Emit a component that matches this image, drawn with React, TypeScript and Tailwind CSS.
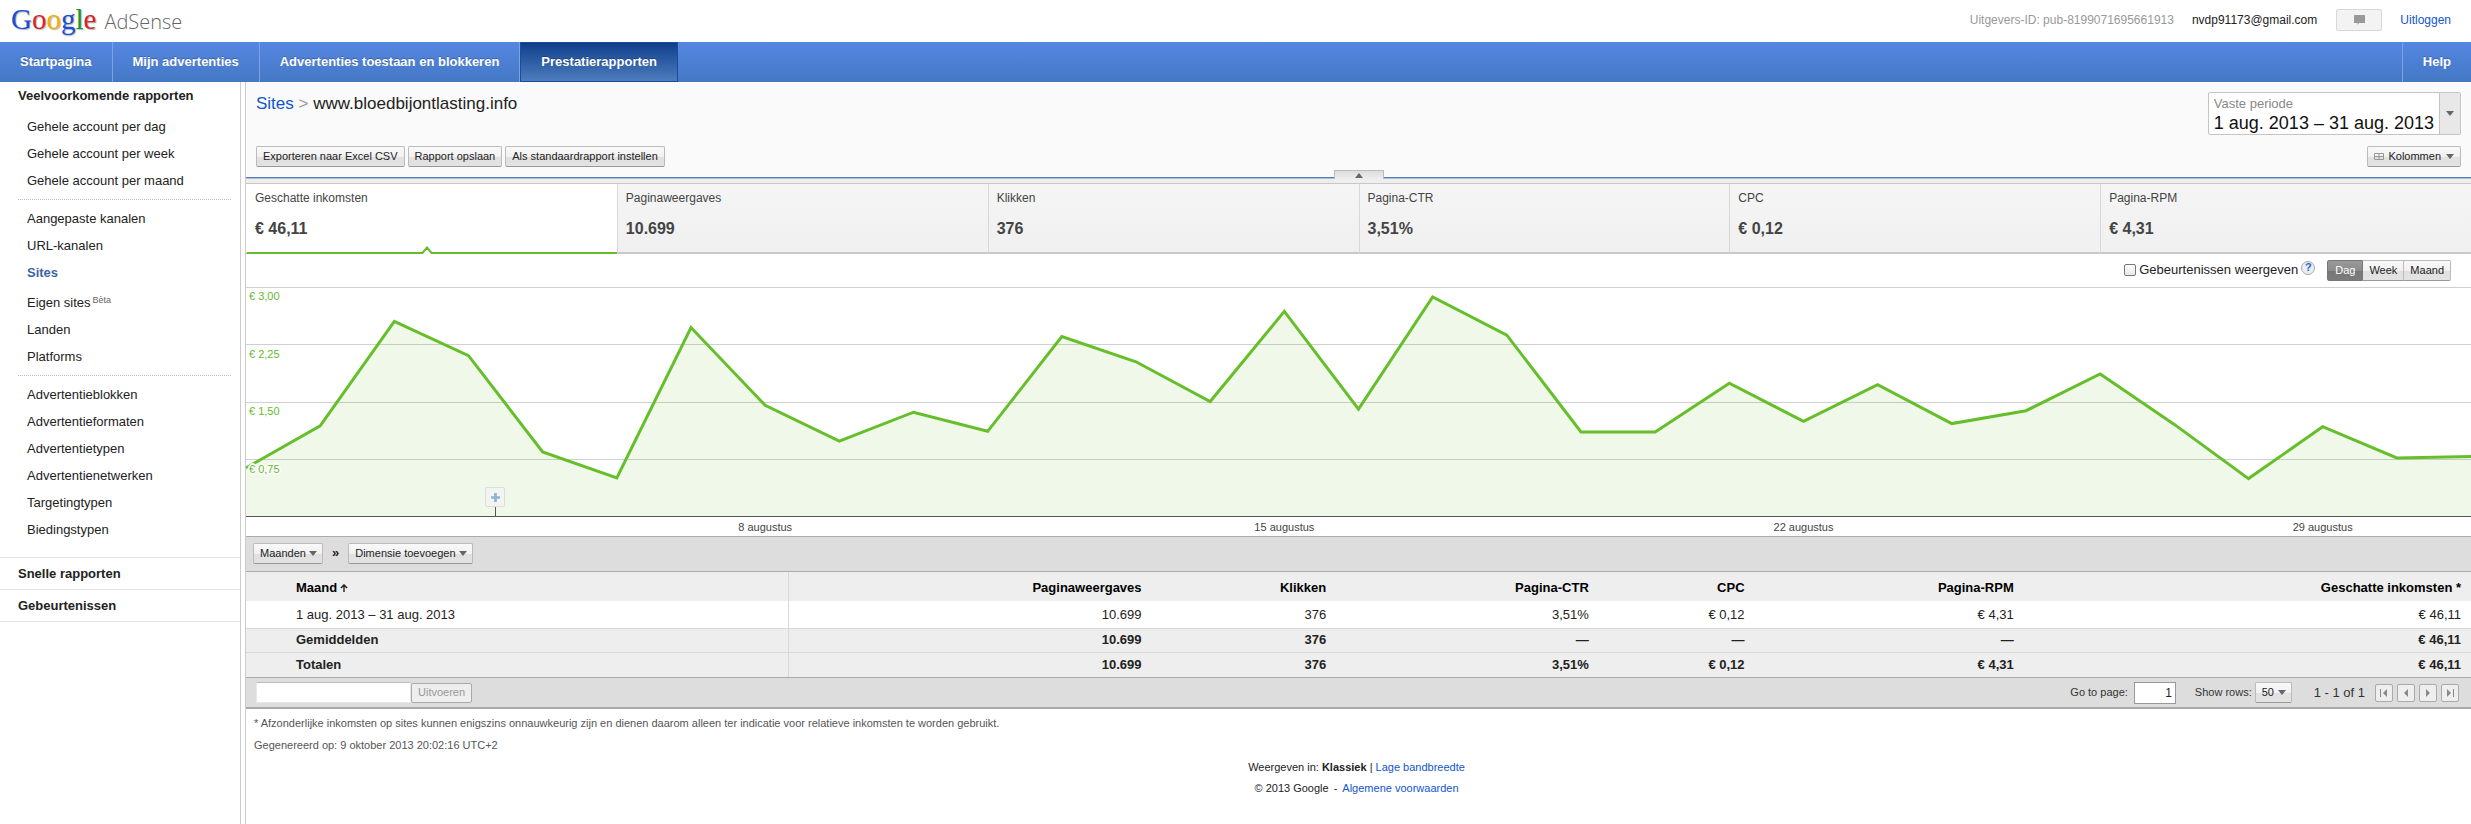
import type { ReactNode } from "react";

const buttonLook =
  "h-[21px] rounded-[2px] border border-[#bbb] border-b-[#999] bg-[linear-gradient(#f9f9f9_0%,#f1f1f1_50%,#e0e0e0_51%,#e3e3e3_100%)] text-[11px] text-[#222]";

const sidebarGroups: { label: string; beta?: boolean; active?: boolean }[][] = [
  [
    { label: "Gehele account per dag" },
    { label: "Gehele account per week" },
    { label: "Gehele account per maand" },
  ],
  [
    { label: "Aangepaste kanalen" },
    { label: "URL-kanalen" },
    { label: "Sites", active: true },
    { label: "Eigen sites", beta: true },
    { label: "Landen" },
    { label: "Platforms" },
  ],
  [
    { label: "Advertentieblokken" },
    { label: "Advertentieformaten" },
    { label: "Advertentietypen" },
    { label: "Advertentienetwerken" },
    { label: "Targetingtypen" },
    { label: "Biedingstypen" },
  ],
];

const metrics = [
  { label: "Geschatte inkomsten", value: "€ 46,11" },
  { label: "Paginaweergaves", value: "10.699" },
  { label: "Klikken", value: "376" },
  { label: "Pagina-CTR", value: "3,51%" },
  { label: "CPC", value: "€ 0,12" },
  { label: "Pagina-RPM", value: "€ 4,31" },
];

// Daily earnings in euros, 1 to 31 August
const earnings = [
  0.63, 1.18, 2.55, 2.1, 0.84, 0.5, 2.47, 1.45, 0.98, 1.36, 1.11, 2.35, 2.02,
  1.5, 2.68, 1.4, 2.87, 2.37, 1.1, 1.1, 1.74, 1.24, 1.72, 1.21, 1.38, 1.86,
  1.2, 0.49, 1.17, 0.76, 0.78,
];
const weekDays = [8, 15, 22, 29];
const scaleLabels = ["€ 3,00", "€ 2,25", "€ 1,50", "€ 0,75"];

const CHART_W = 3000;
const CHART_H = 229;

function Caret({ className = "" }: { className?: string }) {
  return (
    <svg viewBox="0 0 8 5" className={"h-[5px] w-[8px] shrink-0 " + className} aria-hidden="true">
      <path d="M0 0h8L4 5z" fill="#666" />
    </svg>
  );
}

function PillSelect({ label, value }: { label: string; value: string }) {
  return (
    <span className="relative inline-flex items-center">
      <select aria-label={label} className={buttonLook + " appearance-none pl-[6px] pr-[16px]"}>
        <option>{value}</option>
      </select>
      <Caret className="pointer-events-none absolute right-[6px]" />
    </span>
  );
}

function NavLink({ children, className = "" }: { children: ReactNode; className?: string }) {
  return (
    <a
      href="#"
      className={
        "flex items-center px-[20px] text-[13px] font-bold text-white [text-shadow:0_-1px_0_rgba(0,0,0,0.25)] " + className
      }
    >
      {children}
    </a>
  );
}

function Header() {
  return (
    <header className="flex h-[42px] items-center justify-between bg-white pb-[2px] pl-[11px] pr-[20px]">
      <a href="#" className="flex items-baseline gap-[8px]">
        <span className="font-['Liberation_Serif',serif] text-[29px] leading-[36px] [text-shadow:1px_1px_1px_rgba(0,0,0,0.3)]">
          <span className="text-[#1a4fd6]">G</span>
          <span className="text-[#d62428]">o</span>
          <span className="text-[#eeb003]">o</span>
          <span className="text-[#1a4fd6]">g</span>
          <span className="text-[#149a2c]">l</span>
          <span className="text-[#d62428]">e</span>
        </span>
        <span className="font-['Open_Sans',sans-serif] text-[20px] font-light leading-[36px] text-[#666]">AdSense</span>
      </a>
      <div className="flex items-center text-[12px]">
        <span className="mr-[18px] text-[#999]">Uitgevers-ID: pub-8199071695661913</span>
        <span className="mr-[19px] text-[#222]">nvdp91173@gmail.com</span>
        <button
          type="button"
          aria-label="Feedback"
          className="mr-[18px] flex h-[22px] w-[46px] items-center justify-center rounded-[2px] border border-[#d8d8d8] bg-[#f3f3f3]"
        >
          <svg viewBox="0 0 11 10" className="h-[10px] w-[11px]" aria-hidden="true">
            <path d="M0 0h11v8H5L3.5 10V8H0z" fill="#999" />
          </svg>
        </button>
        <a href="#" className="text-[#15c]">Uitloggen</a>
      </div>
    </header>
  );
}

function MainNav() {
  return (
    <nav className="flex h-[40px] bg-gradient-to-b from-[#5587e2] to-[#4478c4]">
      <NavLink className="border-r border-[#7ba3e4]">Startpagina</NavLink>
      <NavLink className="border-r border-[#7ba3e4]">Mijn advertenties</NavLink>
      <NavLink className="border-r border-[#7ba3e4]">Advertenties toestaan en blokkeren</NavLink>
      <NavLink className="border border-[#1b4d97] bg-gradient-to-b from-[#0f3f8c] to-[#4d7dbd]">Prestatierapporten</NavLink>
      <NavLink className="ml-auto border-l border-[#7ba3e4]">Help</NavLink>
    </nav>
  );
}

function Sidebar() {
  return (
    <aside className="w-[241px] shrink-0 border-r border-[#ccc] text-[13px] text-[#222]">
      <h2 className="pl-[18px] pt-[5px] leading-[18px] font-bold">Veelvoorkomende rapporten</h2>
      <div className="flex flex-col pt-[8px]">
        {sidebarGroups.map((group, i) => (
          <ul
            key={i}
            className={
              "ml-[18px] mr-[9px] pl-[9px] leading-[27px] " +
              (i > 0 ? "border-t border-dotted border-[#bbb] pt-[5px] " : "") +
              (i < 2 ? "pb-[5px]" : "pb-[14px]")
            }
          >
            {group.map((item) => (
              <li key={item.label} className={item.beta ? "pt-[3px]" : ""}>
                <a href="#" className={item.active ? "font-bold text-[#3c64a4]" : ""}>
                  {item.label}
                  {item.beta && <sup className="ml-[2px] text-[9px] leading-none text-[#666]">Bèta</sup>}
                </a>
              </li>
            ))}
          </ul>
        ))}
      </div>
      <h2 className="border-t border-[#e5e5e5] pl-[18px] leading-[31px] font-bold">Snelle rapporten</h2>
      <h2 className="border-y border-[#e5e5e5] pl-[18px] leading-[31px] font-bold">Gebeurtenissen</h2>
    </aside>
  );
}

function ReportHeader() {
  return (
    <div className="flex h-[97px] items-stretch justify-between border-b border-[#bbb] bg-[#fafafa] px-[10px] shadow-[inset_0_-1px_0_#4a80c8]">
      <div className="flex flex-col justify-between pb-[11px] pt-[11px]">
        <h1 className="text-[17px] leading-[22px] text-[#222]">
          <a href="#" className="text-[#15c]">Sites</a> <span className="text-[#999]">&gt;</span> www.bloedbijontlasting.info
        </h1>
        <div className="flex gap-[3px]">
          <button type="button" className={buttonLook + " px-[6px]"}>Exporteren naar Excel CSV</button>
          <button type="button" className={buttonLook + " px-[6px]"}>Rapport opslaan</button>
          <button type="button" className={buttonLook + " px-[6px]"}>Als standaardrapport instellen</button>
        </div>
      </div>
      <div className="flex flex-col items-end justify-between pb-[11px] pt-[10px]">
        <button type="button" className="flex h-[43px] rounded-[2px] border border-[#c4c4c4] bg-white text-left">
          <span className="flex flex-col px-[5px] pt-[2px]">
            <span className="text-[13px] leading-[18px] text-[#888]">Vaste periode</span>
            <span className="text-[18px] leading-[20px] text-[#111]">1 aug. 2013 – 31 aug. 2013</span>
          </span>
          <span className="flex w-[21px] items-center justify-center self-stretch border-l border-[#c4c4c4] bg-[#e8e8e8]">
            <Caret />
          </span>
        </button>
        <button type="button" className={buttonLook + " flex items-center gap-[4px] px-[6px]"}>
          <svg viewBox="0 0 10 7" className="h-[7px] w-[10px]" fill="none" stroke="#999" aria-hidden="true">
            <path d="M.5.5h9v6h-9zM5 .5v6M.5 3.5h9" />
          </svg>
          Kolommen
          <Caret className="ml-[1px]" />
        </button>
      </div>
    </div>
  );
}

function Metrics() {
  return (
    <div className="relative border-b border-transparent bg-[#eee] bg-clip-padding pt-[4px]">
      <button
        type="button"
        aria-label="Inklappen"
        className="absolute bottom-full left-1/2 flex h-[9px] w-[50px] -translate-x-1/2 items-center justify-center border border-b-0 border-[#bbb] bg-gradient-to-b from-[#ddd] to-[#eee]"
      >
        <svg viewBox="0 0 8 5" className="h-[5px] w-[8px]" aria-hidden="true">
          <path d="M4 0l4 5H0z" fill="#666" />
        </svg>
      </button>
      <div className="grid grid-cols-6 border-t border-[#c8c8c8]">
        {metrics.map((m, i) => (
          <div
            key={m.label}
            className={
              "relative flex h-[70px] flex-col border-b-2 border-l pl-[8px] pt-[6px] text-[#444] " +
              (i === 0
                ? "border-b-[#66bb2a] border-l-white bg-white"
                : "border-b-[#c8c8c8] border-l-[#d8d8d8] bg-gradient-to-b from-[#f5f5f5] to-[#f0f0f0]")
            }
          >
            <span className="text-[12px] leading-[17px]">{m.label}</span>
            <span className="mt-[12px] text-[16px] leading-[20px] font-bold">{m.value}</span>
            {i === 0 && (
              <svg viewBox="0 0 12 8" className="absolute -bottom-[2px] left-[174px] h-[8px] w-[12px]" aria-hidden="true">
                <path d="M1 8L6 2l5 6z" fill="#fff" />
                <path d="M0 7h1.500L6 1.500 10.500 7H12" fill="none" stroke="#66bb2a" strokeWidth="2" />
              </svg>
            )}
          </div>
        ))}
      </div>
    </div>
  );
}

function ChartToolbar() {
  return (
    <div className="flex h-[32px] items-center justify-end pb-[2px] pr-[20px] text-[13px] text-[#222]">
      <input
        id="events"
        type="checkbox"
        className="h-[12px] w-[12px] appearance-none rounded-[2px] border border-[#777] bg-gradient-to-b from-white to-[#e8e8e8]"
      />
      <label htmlFor="events" className="ml-[3px]">Gebeurtenissen weergeven</label>
      <button
        type="button"
        aria-label="Help"
        className="mb-[5px] ml-[3px] mr-[12px] flex h-[14px] w-[14px] items-center justify-center rounded-full border border-[#aaa] bg-[#e9eef5] text-[11px] leading-none font-bold text-[#2a62d0]"
      >
        ?
      </button>
      <div className="flex">
        <button
          type="button"
          aria-pressed="true"
          className="h-[21px] rounded-l-[2px] border border-[#777] bg-[linear-gradient(#999_0%,#8c8c8c_50%,#777_51%,#7c7c7c_100%)] px-[7px] text-[11px] text-white"
        >
          Dag
        </button>
        <button type="button" className={buttonLook + " rounded-none border-l-0 px-[6px]"}>Week</button>
        <button type="button" className={buttonLook + " rounded-l-none border-l-0 px-[6px]"}>Maand</button>
      </div>
    </div>
  );
}

function Chart() {
  const points = earnings.map((v, i) => {
    const x = (i / (earnings.length - 1)) * CHART_W;
    const y = CHART_H - (v / 3) * CHART_H;
    return x.toFixed(1) + "," + y.toFixed(1);
  });
  return (
    <div>
      <div className="relative h-[230px]">
        <div className="grid h-full grid-rows-4 border-b border-[#555]">
          {scaleLabels.map((label) => (
            <div key={label} className="border-t border-[#d0d0d0]" />
          ))}
        </div>
        <svg
          viewBox={"0 0 " + CHART_W + " " + CHART_H}
          preserveAspectRatio="none"
          className="absolute inset-0 h-[229px] w-full"
          role="img"
          aria-label="Geschatte inkomsten per dag"
        >
          <polygon
            points={"0," + CHART_H + " " + points.join(" ") + " " + CHART_W + "," + CHART_H}
            fill="#66bb2a"
            fillOpacity="0.1"
          />
          <polyline
            points={points.join(" ")}
            fill="none"
            stroke="#66bf2a"
            strokeWidth="3"
            vectorEffect="non-scaling-stroke"
          />
        </svg>
        <div className="absolute inset-0 grid grid-rows-4 pl-[3px] text-[11px] text-[#66bb2a]">
          {scaleLabels.map((label) => (
            <span
              key={label}
              className="pt-[2px] leading-[15px] [text-shadow:1px_0_0_#fff,-1px_0_0_#fff,0_1px_0_#fff,0_-1px_0_#fff,1px_1px_0_#fff,-1px_-1px_0_#fff,1px_-1px_0_#fff,-1px_1px_0_#fff,2px_0_0_#fff,-2px_0_0_#fff,0_2px_0_#fff,0_-2px_0_#fff]"
            >
              {label}
            </span>
          ))}
        </div>
        <div className="absolute bottom-0 left-[239px] flex flex-col items-center">
          <button
            type="button"
            aria-label="Gebeurtenis toevoegen"
            className="flex h-[20px] w-[20px] items-center justify-center rounded-[2px] border border-[#ddd] bg-[#f4f5f2]"
          >
            <svg viewBox="0 0 10 10" className="h-[9px] w-[9px]" aria-hidden="true">
              <path d="M3.500 0h3v3.500H10v3H6.500V10h-3V6.500H0v-3h3.500z" fill="#8db3d6" />
            </svg>
          </button>
          <span className="h-[10px] w-px bg-[#555]" />
        </div>
      </div>
      <div className="relative h-[19px] text-[11px] leading-[21px] text-[#444]">
        {weekDays.map((day) => (
          <span
            key={day}
            className="absolute -translate-x-1/2 whitespace-nowrap"
            style={{ left: ((day - 1) / (earnings.length - 1)) * 100 + "%" }}
          >
            {day} augustus
          </span>
        ))}
      </div>
    </div>
  );
}

function ReportTable() {
  const cell = "pr-[10px] text-right";
  const first = "border-r border-[#d8d8d8] pl-[50px] text-left";
  return (
    <table className="w-full table-fixed border-collapse text-[13px] text-[#222]">
      <colgroup>
        <col className="w-[24.4%]" />
        <col className="w-[16.3%]" />
        <col className="w-[8.3%]" />
        <col className="w-[11.8%]" />
        <col className="w-[7%]" />
        <col className="w-[12.1%]" />
        <col className="w-[20.1%]" />
      </colgroup>
      <thead>
        <tr className="h-[29px] bg-[#eee] text-black">
          <th className={first}>
            <span className="inline-flex items-center gap-[3px] pt-[3px]">
              Maand
              <svg viewBox="0 0 9 9" className="h-[8px] w-[8px]" fill="none" stroke="#222" strokeWidth="1.600" aria-hidden="true">
                <path d="M4.500 9V1M1 4.500L4.500 1 8 4.500" />
              </svg>
            </span>
          </th>
          <th className={cell + " pt-[3px]"}>Paginaweergaves</th>
          <th className={cell + " pt-[3px]"}>Klikken</th>
          <th className={cell + " pt-[3px]"}>Pagina-CTR</th>
          <th className={cell + " pt-[3px]"}>CPC</th>
          <th className={cell + " pt-[3px]"}>Pagina-RPM</th>
          <th className={cell + " pt-[3px]"}>Geschatte inkomsten *</th>
        </tr>
      </thead>
      <tbody>
        <tr className="h-[27px] bg-white">
          <td className={first}>1 aug. 2013 – 31 aug. 2013</td>
          <td className={cell}>10.699</td>
          <td className={cell}>376</td>
          <td className={cell}>3,51%</td>
          <td className={cell}>€ 0,12</td>
          <td className={cell}>€ 4,31</td>
          <td className={cell}>€ 46,11</td>
        </tr>
      </tbody>
      <tfoot className="font-bold">
        <tr className="h-[24px] border-t border-[#d8d8d8] bg-[#eee]">
          <th className={first}>Gemiddelden</th>
          <td className={cell}>10.699</td>
          <td className={cell}>376</td>
          <td className={cell}>—</td>
          <td className={cell}>—</td>
          <td className={cell}>—</td>
          <td className={cell}>€ 46,11</td>
        </tr>
        <tr className="h-[25px] border-t border-[#d8d8d8] bg-[#eee]">
          <th className={first}>Totalen</th>
          <td className={cell}>10.699</td>
          <td className={cell}>376</td>
          <td className={cell}>3,51%</td>
          <td className={cell}>€ 0,12</td>
          <td className={cell}>€ 4,31</td>
          <td className={cell}>€ 46,11</td>
        </tr>
      </tfoot>
    </table>
  );
}

function PagerButton({ label, path }: { label: string; path: string }) {
  return (
    <button
      type="button"
      aria-label={label}
      className="flex h-[18px] w-[18px] items-center justify-center rounded-[2px] border border-[#aaa] bg-[#eee]"
    >
      <svg viewBox="0 0 8 8" className="h-[8px] w-[8px]" aria-hidden="true">
        <path d={path} fill="#888" />
      </svg>
    </button>
  );
}

function TableFooter() {
  return (
    <div className="flex h-[32px] items-center justify-between border-b-2 border-t border-[#aaa] bg-[#ddd] pl-[10px] pr-[12px] text-[11px] text-[#333]">
      <form className="flex items-center" onSubmit={(e) => e.preventDefault()}>
        <input aria-label="Filter" className="h-[21px] w-[155px] border border-[#e8e8e8] border-t-[#bbb] bg-white px-1" />
        <button type="submit" disabled className="h-[20px] rounded-[2px] border border-[#aaa] bg-[#eee] px-[6px] text-[#999]">
          Uitvoeren
        </button>
      </form>
      <div className="flex items-center">
        <label htmlFor="page">Go to page:</label>
        <input
          id="page"
          defaultValue="1"
          className="ml-[6px] mr-[19px] h-[22px] w-[42px] border border-[#999] bg-white pr-[3px] text-right text-[12px] text-[#222]"
        />
        <span className="mr-[3px]">Show rows:</span>
        <PillSelect label="Show rows" value="50" />
        <span className="ml-[22px] mr-[10px] text-[13px]">1 - 1 of 1</span>
        <div className="flex gap-[4px]">
          <PagerButton label="Eerste pagina" path="M0 0h1v8H0zM7 0v8L3 4z" />
          <PagerButton label="Vorige pagina" path="M6 0v8L2 4z" />
          <PagerButton label="Volgende pagina" path="M2 0v8l4-4z" />
          <PagerButton label="Laatste pagina" path="M7 0h1v8H7zM1 0v8l4-4z" />
        </div>
      </div>
    </div>
  );
}

export default function App() {
  return (
    <div className="flex min-h-screen flex-col bg-white font-['Liberation_Sans',Arial,sans-serif]">
      <Header />
      <MainNav />
      <div className="flex grow gap-[4px]">
        <Sidebar />
        <main className="min-w-0 grow border-l border-[#ccc]">
          <ReportHeader />
          <Metrics />
          <ChartToolbar />
          <Chart />
          <div className="flex h-[36px] items-center border-y border-[#aaa] bg-[#ddd] pb-[2px] pl-[7px] text-[#222]">
            <PillSelect label="Maanden" value="Maanden" />
            <span className="mx-[9px] text-[13px] leading-[16px] font-bold">»</span>
            <PillSelect label="Dimensie toevoegen" value="Dimensie toevoegen" />
          </div>
          <ReportTable />
          <TableFooter />
          <div className="px-[8px] pt-[3px] text-[11px] leading-[22px] text-[#555]">
            <p>* Afzonderlijke inkomsten op sites kunnen enigszins onnauwkeurig zijn en dienen daarom alleen ter indicatie voor relatieve inkomsten te worden gebruikt.</p>
            <p>Gegenereerd op: 9 oktober 2013 20:02:16 UTC+2</p>
          </div>
          <footer className="pr-[4px] pt-px text-center text-[11px] leading-[21px] text-[#222]">
            <p>
              Weergeven in: <b>Klassiek</b> | <a href="#" className="text-[#15c]">Lage bandbreedte</a>
            </p>
            <p>
              © 2013 Google<span className="mx-[5px]">-</span>
              <a href="#" className="text-[#15c]">Algemene voorwaarden</a>
            </p>
          </footer>
        </main>
      </div>
    </div>
  );
}
